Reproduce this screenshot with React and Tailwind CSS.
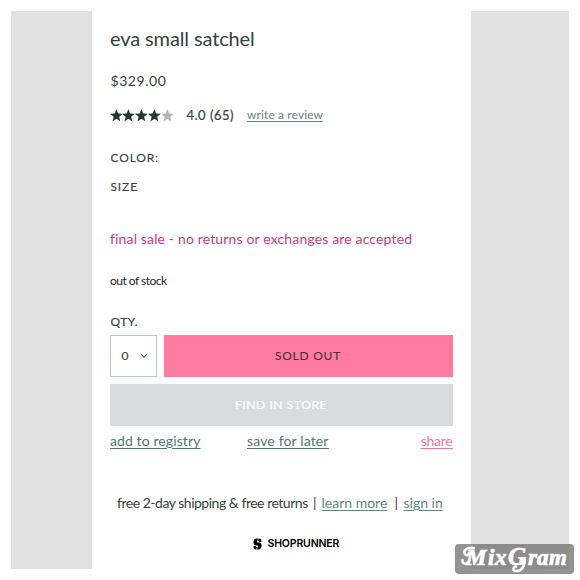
import { ChevronDown } from 'lucide-react';

const Star = ({ className }) => (
  <svg viewBox="0 0 24 24" className={className}>
    <path fill="currentColor" d="M12 0l3.200 8.400 8.800.4-6.900 5.600 2.400 8.700L12 18.200l-7.500 4.900 2.400-8.700L0 8.800l8.800-.4z" />
  </svg>
);

const Rating = () => (
  <div className="flex w-[77px] text-[#1f3a2d]">
    <Star className="h-[13px] w-[12.800px]" />
    <Star className="h-[13px] w-[12.800px]" />
    <Star className="h-[13px] w-[12.800px]" />
    <Star className="h-[13px] w-[12.800px]" />
    <Star className="h-[13px] w-[12.800px] text-[#b3b3b5]" />
  </div>
);

const ShopRunner = () => (
  <div className="mt-[23px] flex h-[16px] items-center pl-[143px] text-black">
    <svg viewBox="0 0 18 24" className="mr-[6px] h-[12px] w-[9px]">
      <path
        fill="currentColor"
        d="M8 1h4c4 0 5 3 5 7h-4c-1-2-2-2-4-2-2 0-2 3 0 3h3c4 0 5 3 5 6 0 5-2 8-7 8H6c-4 0-5-3-5-7h4c1 2 2 2 4 2 2 0 2-3 0-3H6c-4 0-5-3-5-6 0-5 2-8 7-8z"
      />
      <path stroke="white" strokeWidth="1.200" d="M11 0L9 6M9 18l-2 6" />
    </svg>
    <span className="whitespace-nowrap font-['Inter',sans-serif] text-[10.500px] font-semibold leading-4 tracking-[-0.150px]">SHOPRUNNER</span>
  </div>
);

const Watermark = () => (
  <div className="absolute left-[455px] top-[544px] h-[30px] w-[119px] rounded bg-[#6f6f6f]/75">
    <svg viewBox="0 0 119 30" className="h-[30px] w-[119px]">
      <g fill="none" stroke="white" strokeWidth="2.600" strokeLinecap="round">
        <path d="M19 4C11 3 8 7 10 10c1.500 2 4 1 4-1" />
        <path d="M7.500 16c-.5 5 5 5 7 0" />
        <path d="M70 16c-1 8-4 11.500-9 11-3.500-.5-3.500-3.500 0-4.500" />
      </g>
      <text
        y="20.500"
        className="fill-white stroke-white stroke-[0.700px] font-['Liberation_Serif',serif] text-[23px] font-bold italic"
      >
        <tspan x="11">M</tspan>
        <tspan x="33">i</tspan>
        <tspan x="40">x</tspan>
        <tspan x="53" className="text-[25px]">G</tspan>
        <tspan x="73">r</tspan>
        <tspan x="82">a</tspan>
        <tspan x="94">m</tspan>
      </text>
    </svg>
  </div>
);

export default function App() {
  return (
    <div className="relative h-[580px] w-[580px] overflow-hidden bg-white p-[11px] font-['Lato',sans-serif] text-[#35433d]">
      <div className="flex h-[558px] w-[558px] justify-center bg-[#e1e1e1] pr-[17px]">
        <main className="ml-[-1px] flex w-[379px] flex-col bg-white pl-[18px] pr-[18px]">
          <h1 className="mt-[12px] h-[30px] whitespace-nowrap pl-[0.500px] text-[20px] leading-[30px] tracking-[-0.120px]">eva small satchel</h1>
          <p className="mt-[18px] h-[20px] pl-[1px] text-[14px] leading-5 tracking-[0.550px]">$329.00</p>

          <div className="mt-[14px] flex h-[20px] items-center whitespace-nowrap leading-5">
            <Rating />
            <span className="w-[60.500px] text-[13px] tracking-[0.500px] [-webkit-text-stroke:0.200px]">4.0 (65)</span>
            <a className="text-[12px] tracking-[0.120px] text-[#5f8779] underline underline-offset-2">write a review</a>
          </div>

          <p className="mt-[23px] h-[20px] pl-[1px] text-[12px] leading-5 tracking-[0.850px] [-webkit-text-stroke:0.150px]">COLOR:</p>
          <p className="mt-[9px] h-[20px] pl-[1px] text-[12px] leading-5 tracking-[0.850px] [-webkit-text-stroke:0.150px]">SIZE</p>
          <p className="mt-[32px] h-[20px] whitespace-nowrap pl-[0.500px] text-[14px] leading-5 tracking-[0.150px] text-[#cf3c78]">
            final sale - no returns or exchanges are accepted
          </p>
          <p className="mt-[22px] h-[20px] pl-[0.500px] text-[12px] leading-5 tracking-[-0.500px] text-[#1c1f1e]">out of stock</p>
          <p className="mt-[21px] h-[20px] pl-[1px] text-[12px] leading-5 tracking-[0.500px] [-webkit-text-stroke:0.150px]">QTY.</p>

          <div className="mt-[3px] flex h-[42px] gap-[7px]">
            <button className="flex w-[47px] items-center justify-between border border-[#b5cbc4] pl-[11px] pr-[7px] text-[12px] [-webkit-text-stroke:0.150px]">
              0
              <ChevronDown className="h-[10px] w-[10px]" strokeWidth={2.5} />
            </button>
            <button className="flex-1 bg-[#fd7c9f] text-[12px] tracking-[0.750px] text-[#51323b] [-webkit-text-stroke:0.150px]">SOLD OUT</button>
          </div>
          <button className="mt-[7px] h-[42px] bg-[#dadbdd] text-[12px] tracking-[0.600px] text-white [-webkit-text-stroke:0.150px]">
            FIND IN STORE
          </button>

          <div className="mt-[5px] flex h-[20px] whitespace-nowrap pl-[0.500px] text-[14px] leading-5 text-[#4e786a] underline underline-offset-2">
            <span className="w-[137px]">
              <a className="tracking-[0.100px]">add to registry</a>
            </span>
            <a className="tracking-[0.150px]">save for later</a>
            <a className="ml-auto tracking-[-0.250px] text-[#e7799e]">share</a>
          </div>

          <div className="mt-[42px] flex h-[20px] whitespace-nowrap pl-[7.500px] text-[14px] leading-5">
            <span className="w-[196px] tracking-[-0.480px]">free 2-day shipping &amp; free returns</span>
            <span className="w-[8.500px]">|</span>
            <a className="w-[73px] text-[#5f8779] underline underline-offset-2">learn more</a>
            <span className="w-[9px]">|</span>
            <a className="text-[#5f8779] underline underline-offset-2">sign in</a>
          </div>
          <ShopRunner />
        </main>
      </div>
      <Watermark />
    </div>
  );
}
